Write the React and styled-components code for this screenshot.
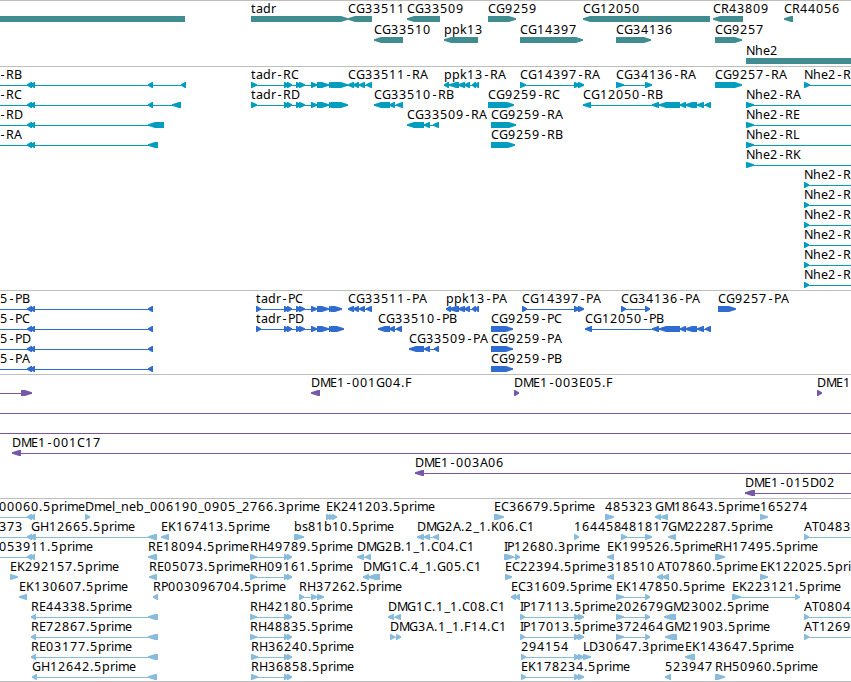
import React from "react";
import styled, { createGlobalStyle } from "styled-components";

const WIDTH = 851;

// Whole-pixel advances keep the small labels evenly spaced
const ADVANCES = {
  A: 8, B: 8, C: 8, D: 9, E: 7, F: 7, G: 9, H: 9, I: 3, K: 8, L: 6, M: 10,
  N: 9, P: 7, R: 8, T: 7, a: 7, b: 8, d: 8, e: 7, h: 8, i: 3, k: 7, l: 3,
  m: 11, n: 8, p: 8, r: 5, s: 6, t: 5, ".": 4, "-": 7, _: 6,
};

const BEARINGS = { "-": 1.5, _: 0.5 };

const glyphPositions = (text, start) => {
  let x = start;
  return text.split("").map((char) => {
    const current = x + (BEARINGS[char] || 0);
    x += ADVANCES[char] || 8;
    return current;
  });
};

// label, direction, exons, label start (defaults to the first exon)
const feat = (label, dir, exons, labelX = exons[0][0]) => ({
  label,
  dir,
  exons,
  labelX,
});

const OFF_LEFT = [-20, -12];
const OFF_RIGHT = [870, 880];
const PAIR = [[27, 32], [30, 35]];
const TADR = [[284, 289], [287, 292], [296, 301], [299, 305], [311, 317], [317, 329]];
const CG33511 = [[348, 354], [353, 359], [359, 365], [366, 372]];
const CG12050 = [[652, 659], [659, 680], [680, 686], [685, 697], [697, 704], [705, 711]];
const SPLICE = [[574, 580], [578, 584]];
const rhExons = (x) => [[x, x + 7], [284, 289], [287, 292]];
const nhe = (label, x, size) => feat(label, ">", [[x, x + size], OFF_RIGHT]);

const genes = [
  [
    feat("", "<", [[-20, 185]]),
    feat("tadr", ">", [[251, 348]]),
    feat("CG33511", "<", [[348, 372]]),
    feat("CG33509", "<", [[407, 440]]),
    feat("CG9259", ">", [[488, 516]]),
    feat("CG12050", "<", [[583, 710]]),
    feat("CR43809", "<", [[713, 743]]),
    feat("CR44056", "<", [[784, 793]]),
  ],
  [
    feat("CG33510", "<", [[374, 403]]),
    feat("ppk13", "<", [[444, 478]]),
    feat("CG14397", ">", [[520, 583]]),
    feat("CG34136", ">", [[616, 651]]),
    feat("CG9257", ">", [[715, 742]]),
  ],
  [feat("Nhe2", ">", [[746, 880]])],
];

const transcripts = [
  [
    feat("-RB", "<", [OFF_LEFT, ...PAIR, [148, 153], [181, 186]], -1),
    feat("tadr-RC", ">", [[251, 257], ...TADR, [329, 333], [331, 348]]),
    feat("CG33511-RA", "<", CG33511),
    feat("ppk13-RA", "<", [[444, 449], [449, 459], [458, 465], [464, 470], [472, 476], [475, 479]]),
    feat("CG14397-RA", ">", [[520, 526], ...SPLICE]),
    feat("CG34136-RA", ">", [[616, 624], [645, 652]]),
    feat("CG9257-RA", ">", [[715, 742]]),
    nhe("Nhe2-R", 804, 6),
  ],
  [
    feat("-RC", "<", [OFF_LEFT, ...PAIR, [148, 153], [172, 181]], -1),
    feat("tadr-RD", ">", [[251, 257], ...TADR, [329, 333], [331, 348]]),
    feat("CG33510-RB", "<", [[374, 390], [389, 395], [396, 403]]),
    feat("CG9259-RC", ">", [[488, 514]]),
    feat("CG12050-RB", "<", [[583, 591], ...CG12050]),
    nhe("Nhe2-RA", 746, 8),
  ],
  [
    feat("-RD", "<", [OFF_LEFT, ...PAIR, [148, 164]], -1),
    feat("CG33509-RA", "<", [[407, 424], [424, 430], [433, 439]]),
    feat("CG9259-RA", ">", [[491, 516]]),
    nhe("Nhe2-RE", 746, 8),
  ],
  [
    feat("-RA", "<", [OFF_LEFT, ...PAIR, [148, 158]], -1),
    feat("CG9259-RB", ">", [[491, 515]]),
    nhe("Nhe2-RL", 746, 8),
  ],
  [nhe("Nhe2-RK", 746, 8)],
  ...Array.from({ length: 6 }, () => [nhe("Nhe2-R", 804, 5)]),
];

const proteins = [
  [
    feat("5-PB", "<", [OFF_LEFT, ...PAIR, [148, 153]], 0),
    feat("tadr-PC", ">", [[256, 261], ...TADR, [329, 333], [331, 342]]),
    feat("CG33511-PA", "<", CG33511),
    feat("ppk13-PA", "<", [[446, 451], [449, 459], [458, 465], [464, 470], [472, 476], [475, 479]]),
    feat("CG14397-PA", ">", [[522, 527], ...SPLICE]),
    feat("CG34136-PA", ">", [[621, 626], [645, 650]]),
    feat("CG9257-PA", ">", [[718, 736]]),
  ],
  [
    feat("5-PC", "<", [OFF_LEFT, ...PAIR, [148, 153]], 0),
    feat("tadr-PD", ">", [[256, 261], ...TADR, [329, 333], [331, 344]]),
    feat("CG33510-PB", "<", [[378, 390], [389, 395], [396, 402]]),
    feat("CG9259-PC", ">", [[491, 513]]),
    feat("CG12050-PB", "<", [[585, 592], ...CG12050]),
  ],
  [
    feat("5-PD", "<", [OFF_LEFT, ...PAIR, [148, 153]], 0),
    feat("CG33509-PA", "<", [[409, 424], [424, 430], [434, 439]]),
    feat("CG9259-PA", ">", [[491, 513]]),
  ],
  [
    feat("5-PA", "<", [OFF_LEFT, ...PAIR, [148, 153]], 0),
    feat("CG9259-PB", ">", [[491, 513]]),
  ],
];

const clones = [
  [
    feat("", ">", [OFF_LEFT, [21, 32]]),
    feat("DME1-001G04.F", "<", [[311, 320]]),
    feat("DME1-003E05.F", ">", [[514, 519]]),
    feat("DME1", ">", [[817, 822]]),
  ],
  [feat("", ">", [OFF_LEFT, OFF_RIGHT])],
  [feat("", ">", [OFF_LEFT, OFF_RIGHT])],
  [feat("DME1-001C17", "<", [[12, 21], OFF_RIGHT])],
  [feat("DME1-003A06", "<", [[415, 424], OFF_RIGHT])],
  [feat("DME1-015D02", "<", [[745, 755], OFF_RIGHT])],
];

const ests = [
  [
    feat("00060.5prime", "<", [OFF_LEFT, ...PAIR], -1),
    feat("Dmel_neb_006190_0905_2766.3prime", ">", [[85, 90]]),
    feat("EK241203.5prime", ">", [[326, 331], [329, 334], [332, 337]]),
    feat("EC36679.5prime", ">", [[494, 504]]),
    feat("485323", ">", [[605, 614]]),
    feat("GM18643.5prime", "<", [[655, 661], [660, 668]]),
    feat("165274", ">", [[760, 768]]),
  ],
  [
    feat("373", "<", [OFF_LEFT, ...PAIR], -1),
    feat("GH12665.5prime", "<", [[31, 36], [148, 157]]),
    feat("EK167413.5prime", "<", [[161, 169]]),
    feat("bs81b10.5prime", ">", [[294, 304]]),
    feat("DMG2A.2_1.K06.C1", "<", [[417, 424], [424, 430], [433, 439]]),
    feat("164458", ">", [[574, 579]]),
    feat("481817", ">", [[621, 627], [645, 652]]),
    feat("GM22287.5prime", "<", [[668, 676]]),
    nhe("AT0483", 804, 5),
  ],
  [
    feat("053911.5prime", "<", [OFF_LEFT, ...PAIR], -1),
    feat("RE18094.5prime", "<", [[148, 157]]),
    feat("RH49789.5prime", ">", rhExons(250)),
    feat("DMG2B.1_1.C04.C1", "<", [[357, 364], [365, 371]]),
    feat("IP12680.3prime", ">", [[504, 514], [515, 520]]),
    feat("EK199526.5prime", "<", [[607, 614]]),
    feat("RH17495.5prime", ">", [[715, 725]]),
  ],
  [
    feat("EK292157.5prime", ">", [[10, 18]]),
    feat("RE05073.5prime", "<", [[149, 157]]),
    feat("RH09161.5prime", ">", rhExons(250)),
    feat("DMG1C.4_1.G05.C1", "<", [[363, 369], [368, 380]]),
    feat("EC22394.5prime", ">", [[505, 512]]),
    feat("318510", "<", [[607, 614]]),
    feat("AT07860.5prime", "<", [[657, 663], [662, 669]]),
    feat("EK122025.5pri", ">", [[760, 768]]),
  ],
  [
    feat("EK130607.5prime", "<", [[19, 27]]),
    feat("RP003096704.5prime", "<", [[153, 158]]),
    feat("RH37262.5prime", ">", [[299, 304], [311, 317], [317, 324]]),
    feat("EC31609.5prime", "<", [[511, 516], [515, 520]]),
    feat("EK147850.5prime", ">", [[616, 624], [645, 650]]),
    feat("EK223121.5prime", ">", [[732, 741], [795, 800]]),
  ],
  [
    feat("RE44338.5prime", "<", [[31, 36], [148, 158]]),
    feat("RH42180.5prime", ">", rhExons(250)),
    feat("DMG1C.1_1.C08.C1", "<", [[388, 394], [395, 401]]),
    feat("IP17113.5prime", ">", [[520, 525], ...SPLICE]),
    feat("202679", ">", [[616, 624], [645, 650]]),
    feat("GM23002.5prime", "<", [[664, 676]]),
    nhe("AT0804", 804, 5),
  ],
  [
    feat("RE72867.5prime", "<", [[31, 36], [148, 158]]),
    feat("RH48835.5prime", ">", rhExons(250)),
    feat("DMG3A.1_1.F14.C1", ">", [[390, 395], [396, 401]]),
    feat("IP17013.5prime", ">", [[520, 525], ...SPLICE]),
    feat("372464", ">", [[616, 624], [645, 650]]),
    feat("GM21903.5prime", "<", [[665, 677]]),
    nhe("AT1269", 804, 5),
  ],
  [
    feat("RE03177.5prime", "<", [[31, 36], [148, 158]]),
    feat("RH36240.5prime", ">", rhExons(251)),
    feat("294154", ">", [[521, 526], ...SPLICE]),
    feat("LD30647.3prime", ">", [[583, 591]]),
    feat("EK143647.5prime", "<", [[685, 695]]),
  ],
  [
    feat("GH12642.5prime", "<", [[32, 37], [148, 157]]),
    feat("RH36858.5prime", ">", rhExons(251)),
    feat("EK178234.5prime", ">", [[521, 526], ...SPLICE]),
    feat("523947", "<", [[665, 671]]),
    feat("RH50960.5prime", ">", [[715, 725]]),
  ],
];

const tracks = [
  { id: "genes", color: "#408c91", rowHeight: 21, gap: 2, rows: genes },
  { id: "transcripts", color: "#009dbe", rowHeight: 20, gap: 3, rows: transcripts },
  { id: "proteins", color: "#306ccf", rowHeight: 20, gap: 3, rows: proteins },
  { id: "clones", color: "#7657a8", rowHeight: 20, gap: 3, rows: clones },
  { id: "ests", color: "#88bcdd", rowHeight: 20, gap: 2, rows: ests },
];

// Long exons keep a square body, short ones are all arrowhead
const exonPoints = ([start, end], dir) => {
  const head = Math.min(end - start - 1, 7);
  return dir === ">"
    ? `${start},15 ${end - head},15 ${end},17.3 ${end},18.7 ${end - head},21 ${start},21`
    : `${end},15 ${start + head},15 ${start},17.3 ${start},18.7 ${start + head},21 ${end},21`;
};

const Feature = ({ feature }) => {
  const { label, dir, exons, labelX } = feature;
  const start = exons[0][0];
  const end = exons[exons.length - 1][1];

  return (
    <g>
      {label && (
        <Label x={glyphPositions(label, labelX).join(" ")} y="12">
          {label}
        </Label>
      )}
      {exons.length > 1 && (
        <rect x={start} y="18" width={end - start} height="1" />
      )}
      {exons.map((exon) => (
        <polygon key={exon[0]} points={exonPoints(exon, dir)} />
      ))}
    </g>
  );
};

const App = () => (
  <>
    <GlobalStyle />
    <Browser>
      {tracks.map((track) => (
        <Track key={track.id} $gap={track.gap}>
          {track.rows.map((row, i) => (
            <Row key={i} $height={track.rowHeight} $color={track.color}>
              {row.map((feature, j) => (
                <Feature key={j} feature={feature} />
              ))}
            </Row>
          ))}
        </Track>
      ))}
    </Browser>
  </>
);

const GlobalStyle = createGlobalStyle`
  body {
    margin: 0;
    background: #fff;
  }
`;

const Browser = styled.main`
  width: ${WIDTH}px;
  height: 682px;
  overflow: hidden;
  border-bottom: 1px solid #bebebe;
  box-sizing: border-box;
`;

const Track = styled.section`
  display: flex;
  flex-direction: column;
  border-top: 1px solid #bebebe;
  padding-bottom: ${(props) => props.$gap}px;
`;

const Row = styled.svg`
  display: block;
  flex: none;
  width: 100%;
  height: ${(props) => props.$height}px;
  fill: ${(props) => props.$color};
  overflow: visible;
`;

const Label = styled.text`
  font-family: "Noto Sans", "DejaVu Sans", sans-serif;
  font-size: 12.5px;
  fill: #000;
`;

export default App;
